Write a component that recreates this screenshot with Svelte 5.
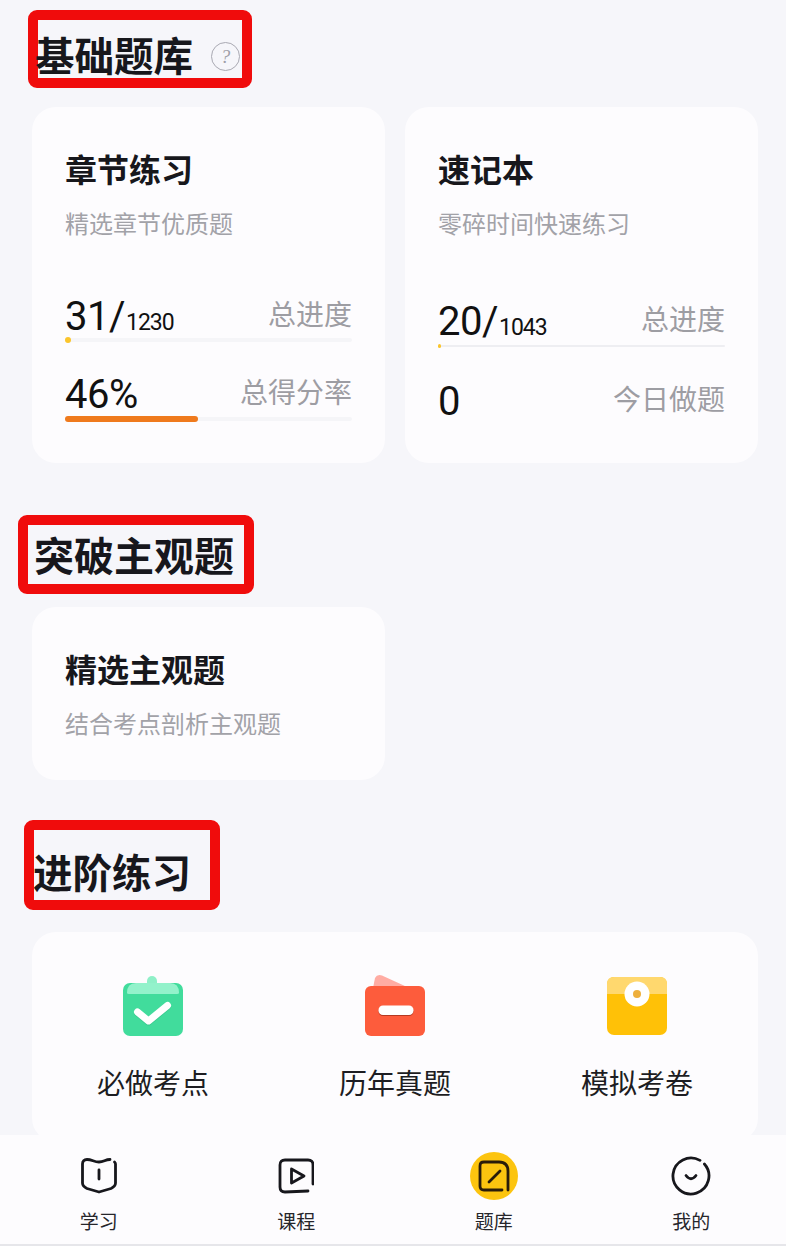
<script>
  const cards = [
    {
      title: '章节练习', sub: '精选章节优质题', cls: 'first',
      rows: [
        { big: '31/', small: '1230', label: '总进度', pct: 2, kind: 'dot' },
        { big: '46%', small: '', label: '总得分率', pct: 46.4, kind: 'fill' }
      ]
    },
    {
      title: '速记本', sub: '零碎时间快速练习', cls: 'second',
      rows: [
        { big: '20/', small: '1043', label: '总进度', pct: 1, kind: 'dot' },
        { big: '0', small: '', label: '今日做题', pct: 0, kind: 'none' }
      ]
    }
  ];
</script>

<div class="page">
  <main class="main">
    <h2 class="head head-a">
      <span class="head-text">基础题库</span>
      <span class="help">?</span>
    </h2>

    <div class="card-row">
      {#each cards as c}
        <section class="card tall {c.cls}">
          <h3 class="card-title">{c.title}</h3>
          <p class="card-sub">{c.sub}</p>
          {#each c.rows as r}
            <div class="stat">
              <span class="num">{r.big}<small class="num-small">{r.small}</small></span>
              <span class="stat-label">{r.label}</span>
            </div>
            {#if r.kind !== 'none'}
              <div class="track {r.kind}">
                <div class="bar" style="width: {r.pct}%"></div>
              </div>
            {/if}
          {/each}
        </section>
      {/each}
    </div>

    <h2 class="head head-b"><span class="head-text">突破主观题</span></h2>

    <section class="card short">
      <h3 class="card-title">精选主观题</h3>
      <p class="card-sub">结合考点剖析主观题</p>
    </section>

    <h2 class="head head-c"><span class="head-text">进阶练习</span></h2>

    <section class="card wide">
      <div class="feature">
        <svg class="ficon" width="62" height="62" viewBox="0 -1 62 62">
          <rect x="25" y="1" width="10" height="12" rx="5" fill="#8ff0c8" />
          <rect x="1" y="8" width="60" height="53" rx="7" fill="#41dc9c" />
          <path d="M5 18 Q5 8 14 8 H48 Q57 8 57 18 Q57 19 55 19 H7 Q5 19 5 18 Z" fill="#93f2cb" />
          <path d="M15.500 37 L26.500 46 L45.500 30.500" fill="none" stroke="#2fb982" stroke-opacity="0.5" stroke-width="7" stroke-linecap="round" stroke-linejoin="round" transform="translate(0 1)" />
          <path d="M15.500 37 L26.500 46 L45.500 30.500" fill="none" stroke="#fff" stroke-width="7" stroke-linecap="round" stroke-linejoin="round" />
        </svg>
        <span class="flabel">必做考点</span>
      </div>
      <div class="feature">
        <svg class="ficon" width="60" height="62" viewBox="0 0 60 62">
          <path d="M8 14 L10 4 Q12 0 17 1.500 L41 12.500 Z" fill="#ffaca3" />
          <rect x="0" y="12" width="60" height="50" rx="6" fill="#fd5c3c" />
          <rect x="13.500" y="32.500" width="35" height="9.500" rx="4.500" fill="#b53a22" />
          <rect x="13.500" y="31.500" width="35" height="9.500" rx="4.500" fill="#fff" />
        </svg>
        <span class="flabel">历年真题</span>
      </div>
      <div class="feature">
        <svg class="ficon" width="60" height="62" viewBox="0 0 60 62">
          <rect x="0" y="3" width="60" height="58" rx="7" fill="#ffc107" />
          <path d="M0 20 V10 Q0 3 7 3 H53 Q60 3 60 10 V20 Z" fill="#ffd86e" />
          <circle cx="30" cy="20" r="12.500" fill="#fff" />
          <circle cx="30" cy="20" r="4" fill="#eeb03c" />
        </svg>
        <span class="flabel">模拟考卷</span>
      </div>
    </section>
  </main>

  <nav class="tabs">
    <div class="tab">
      <div class="tab-icon">
        <svg width="36" height="36" viewBox="0 0 36 36" fill="none" stroke="#17171c" stroke-width="2.800" stroke-linecap="round" stroke-linejoin="round">
          <path d="M29 1.500 C24 1.500 23 4 18 4 C13 4 11 1.500 6 1.500 C3 1.500 1.500 3 1.500 6 V25 C1.500 28 3 29 6 30.500 L18 34 L30 30.500 C33 29 34.500 28 34.500 25 V6 C34.500 5 34 4.500 33.500 4" />
          <path d="M18 12 V21" />
        </svg>
      </div>
      <span class="tab-label">学习</span>
    </div>
    <div class="tab">
      <div class="tab-icon">
        <svg width="36" height="36" viewBox="0 0 36 36" fill="none" stroke="#17171c" stroke-width="2.800" stroke-linecap="round" stroke-linejoin="round">
          <path d="M35 26 V7 Q35 2 30 2 H7 Q2 2 2 7 V29 Q2 34 7 34 L30 33" />
          <path d="M13.500 11 L26 18 L13.500 25 Z" />
        </svg>
      </div>
      <span class="tab-label">课程</span>
    </div>
    <div class="tab">
      <div class="tab-icon active">
        <svg width="36" height="36" viewBox="0 0 36 36" fill="none" stroke="#2a1c0a" stroke-width="2.800" stroke-linecap="round" stroke-linejoin="round">
          <path d="M32 32 V13 Q32 4 23 4 H8 Q4 4 4 8 V28 Q4 32 8 32 H26" />
          <path d="M13 24 L24 13" />
        </svg>
      </div>
      <span class="tab-label">题库</span>
    </div>
    <div class="tab">
      <div class="tab-icon">
        <svg width="40" height="40" viewBox="0 0 40 40" fill="none" stroke="#17171c" stroke-width="2.800" stroke-linecap="round" stroke-linejoin="round">
          <path d="M29 4.400 A18 18 0 1 0 33.400 8" />
          <path d="M15 19.500 Q20 26 25 19.500" />
        </svg>
      </div>
      <span class="tab-label">我的</span>
    </div>
  </nav>
</div>

<style>
  :global(body) {
    margin: 0;
    background: #f6f6fa;
    font-family: "Noto Sans CJK SC", "Noto Sans", sans-serif;
  }
  .page {
    width: 786px;
    height: 1246px;
    overflow: hidden;
    display: flex;
    flex-direction: column;
    background: #f6f6fa;
    color: #17171c;
  }
  .main {
    height: 1135px;
    flex: none;
    overflow: hidden;
    padding-top: 10px;
    box-sizing: border-box;
  }
  .head {
    margin: 0;
    box-sizing: border-box;
    display: flex;
    align-items: center;
    border: 10px solid #f00c0c;
    border-radius: 9px;
    font-weight: 700;
    line-height: 42px;
    white-space: nowrap;
  }
  .head-a {
    margin-left: 28px;
    width: 224px;
    height: 78px;
    padding-top: 10px;
    font-size: 39.500px;
  }
  .head-a .head-text { margin-left: -3px; }
  .head-b {
    margin: 52px 0 0 18px;
    width: 236px;
    height: 79px;
    padding: 0 0 1px 6px;
    font-size: 40px;
  }
  .head-c {
    margin: 40px 0 0 24px;
    width: 196px;
    height: 90px;
    padding-top: 12px;
    font-size: 39.500px;
  }
  .head-c .head-text { margin-left: -1px; }
  .help {
    width: 29px;
    height: 29px;
    margin: 4px 0 0 18px;
    box-sizing: border-box;
    border: 1.500px solid #a9a9b2;
    border-radius: 50%;
    display: flex;
    align-items: center;
    justify-content: center;
    font-family: "Liberation Serif", serif;
    font-size: 19px;
    font-weight: 400;
    font-style: italic;
    color: #a0a0a8;
    line-height: 1;
  }
  .card-row {
    display: flex;
    gap: 20px;
    margin: 19px 0 0 32px;
  }
  .card {
    box-sizing: border-box;
    background: #fdfcfe;
    border-radius: 24px;
  }
  .tall {
    width: 353px;
    height: 356px;
    padding: 42px 33px 0;
  }
  .short {
    width: 353px;
    height: 173px;
    margin: 13px 0 0 32px;
    padding: 42px 33px 0;
  }
  .card-title {
    margin: 0;
    font-size: 32px;
    line-height: 38px;
    font-weight: 700;
  }
  .card-sub {
    margin: 20px 0 0;
    font-size: 24px;
    line-height: 32px;
    color: #a2a2a8;
  }
  .stat {
    display: flex;
    justify-content: space-between;
    align-items: center;
    height: 44px;
    margin-top: 29px;
  }
  .card-sub + .stat { margin-top: 54px; }
  .second .card-sub + .stat { margin-top: 59px; }
  .second .stat { margin-top: 31px; }
  .num {
    margin-top: 9px;
    font-family: Roboto, sans-serif;
    font-size: 40px;
    line-height: 44px;
    letter-spacing: -0.500px;
    color: #111;
  }
  .num-small {
    font-size: 23px;
    letter-spacing: -1px;
    margin-left: 1px;
  }
  .stat-label {
    margin-bottom: 4px;
    font-size: 28px;
    line-height: 36px;
    color: #9d9da3;
  }
  .track {
    position: relative;
    background: #f5f5f8;
    border-radius: 3px;
    margin-top: 1px;
    height: 4px;
  }
  .track.fill {
    margin-top: 2px;
  }
  .second .track {
    height: 2px;
    margin-top: 3px;
    background: #eeeef2;
  }
  .bar {
    position: absolute;
    left: 0;
    top: 50%;
    transform: translateY(-50%);
    height: 6px;
    border-radius: 3px;
  }
  .fill .bar { background: #ef7a1d; }
  .dot .bar { background: #fbc52c; }
  .second .dot .bar { height: 4px; }
  .wide {
    width: 726px;
    height: 210px;
    margin: 22px 0 0 32px;
    display: grid;
    grid-template-columns: repeat(3, 242px);
    padding-top: 42px;
  }
  .feature {
    display: flex;
    flex-direction: column;
    align-items: center;
  }
  .ficon { display: block; }
  .flabel {
    margin-top: 28px;
    font-size: 28px;
    line-height: 36px;
    color: #1d1d22;
  }
  .tabs {
    flex: none;
    box-sizing: border-box;
    height: 111px;
    display: grid;
    grid-template-columns: repeat(4, 197.500px);
    background: #fdfcfe;
    border-bottom: 2px solid #e6e6ea;
    padding-top: 17px;
  }
  .tab {
    display: flex;
    flex-direction: column;
    align-items: center;
  }
  .tab-icon {
    width: 48px;
    height: 48px;
    display: flex;
    align-items: center;
    justify-content: center;
  }
  .tab-icon.active {
    background: #fcc40f;
    border-radius: 50%;
  }
  .tab-label {
    margin-top: 8px;
    font-size: 19px;
    line-height: 26px;
    color: #26262b;
  }
</style>
